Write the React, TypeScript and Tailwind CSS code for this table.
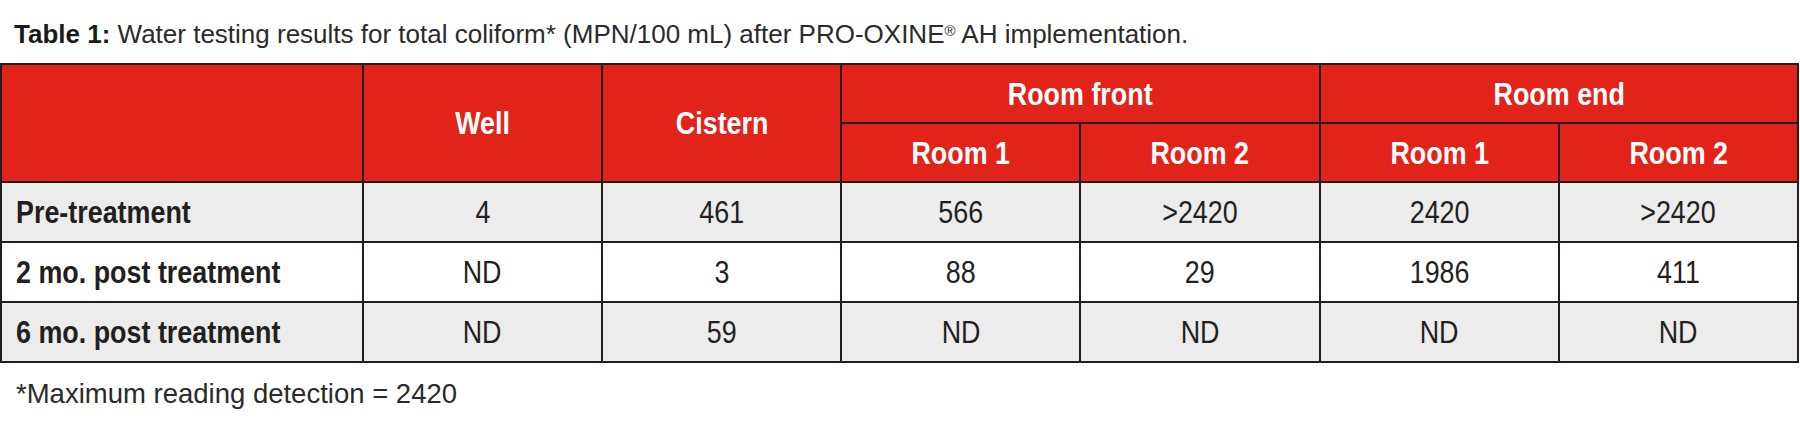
import React from 'react';

// Coliform results table
const rows = [
  { label: 'Pre-treatment', values: ['4', '461', '566', '>2420', '2420', '>2420'], bg: 'bg-[#ececec]' },
  { label: '2 mo. post treatment', values: ['ND', '3', '88', '29', '1986', '411'], bg: 'bg-white' },
  { label: '6 mo. post treatment', values: ['ND', '59', 'ND', 'ND', 'ND', 'ND'], bg: 'bg-[#ececec]' },
];

// condensed look: Arial metrics squeezed sideways
function Narrow({ children, left = false }: { children: React.ReactNode; left?: boolean }) {
  return (
    <span className={`inline-block scale-x-[0.84] whitespace-nowrap ${left ? 'origin-left' : 'origin-center'}`}>
      {children}
    </span>
  );
}

const cell = 'border-2 border-[#231f20]';

export default function App() {
  return (
    <div className="w-[1800px] h-[439px] bg-white text-[#231f20]" style={{ fontFamily: '"Liberation Sans", Arial, sans-serif' }}>
      <p className="pl-[14px] pt-[18px] h-[63px] text-[26px] leading-[32px] text-[#2a2a2a]">
        <span className="font-bold text-[#1a1a1a]">Table 1:</span> Water testing results for total coliform* (MPN/100 mL) after PRO-OXINE
        <sup className="text-[15px]">®</sup> AH implementation.
      </p>

      <table className="w-[1799px] border-collapse table-fixed">
        <colgroup>
          <col className="w-[362px]" />
          <col />
          <col />
          <col />
          <col />
          <col />
          <col />
        </colgroup>
        <thead>
          <tr className="h-[59px] bg-[#e2231a] text-white text-[32px] font-bold">
            <th rowSpan={2} className={cell}></th>
            <th rowSpan={2} className={cell}><Narrow>Well</Narrow></th>
            <th rowSpan={2} className={cell}><Narrow>Cistern</Narrow></th>
            <th colSpan={2} className={cell}><Narrow>Room front</Narrow></th>
            <th colSpan={2} className={cell}><Narrow>Room end</Narrow></th>
          </tr>
          <tr className="h-[59px] bg-[#e2231a] text-white text-[32px] font-bold">
            <th className={cell}><Narrow>Room 1</Narrow></th>
            <th className={cell}><Narrow>Room 2</Narrow></th>
            <th className={cell}><Narrow>Room 1</Narrow></th>
            <th className={cell}><Narrow>Room 2</Narrow></th>
          </tr>
        </thead>
        <tbody>
          {rows.map((r) => (
            <tr key={r.label} className={`h-[60px] ${r.bg}`}>
              <td className={`${cell} pl-[14px] text-[32px] font-bold`}>
                <Narrow left>{r.label}</Narrow>
              </td>
              {r.values.map((v, i) => (
                <td key={i} className={`${cell} text-center text-[32px]`}>
                  <Narrow>{v}</Narrow>
                </td>
              ))}
            </tr>
          ))}
        </tbody>
      </table>

      <p className="pl-[16px] pt-[15px] text-[27.5px] leading-[32px] text-[#2a2a2a]">*Maximum reading detection = 2420</p>
    </div>
  );
}
